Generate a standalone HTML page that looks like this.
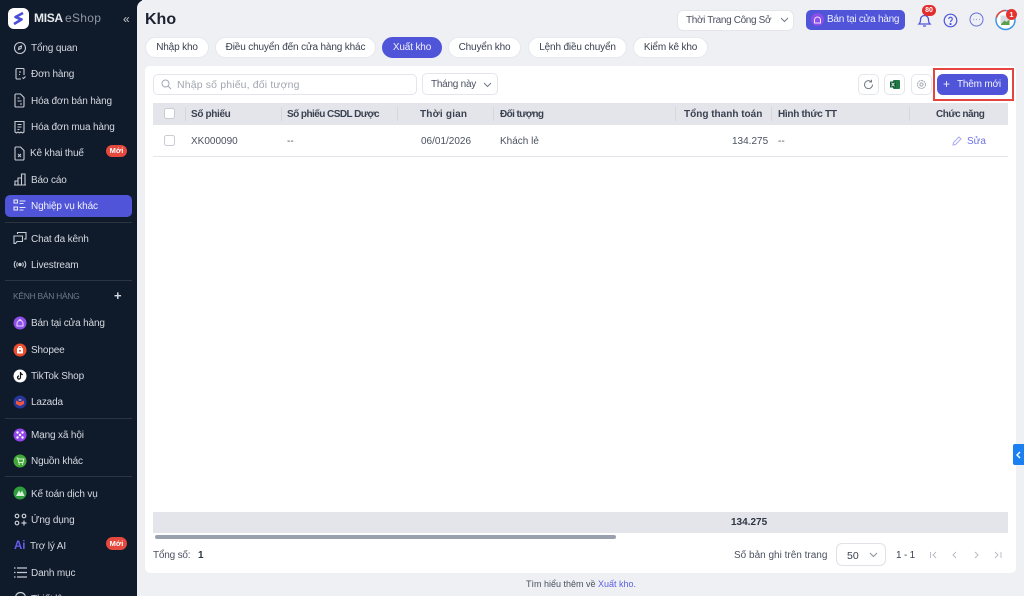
<!DOCTYPE html>
<html><head><meta charset="utf-8">
<style>
*{box-sizing:border-box}
html,body{margin:0;padding:0;width:1024px;height:596px;overflow:hidden;background:#eef0f4;font-family:"Liberation Sans","Noto Sans CJK SC",sans-serif;font-size:10px;color:#3a4150}
#root{position:absolute;left:0;top:0;width:1024px;height:596px;overflow:hidden;background:#eef0f4}
.a{position:absolute;white-space:nowrap}
.t{position:absolute;white-space:nowrap;line-height:14px;height:14px}
#side{position:absolute;left:0;top:0;width:142px;height:596px;background:#0f1a2a;overflow:hidden}
#main{position:absolute;left:137px;top:0;width:887px;height:596px;background:#eef0f4;border-radius:8px 0 0 0}
.m{position:absolute;left:31px;margin-top:1px;color:#d5d9e0;white-space:nowrap;line-height:14px;height:14px;font-size:10px;letter-spacing:-.15px}
.sep{position:absolute;left:5px;width:127px;height:1px;background:#2a3443}
.tab{position:absolute;top:37px;height:21px;background:#fff;border:1px solid #e6e8ee;border-radius:11px;text-align:center;line-height:20px;font-size:10px;letter-spacing:-.15px;color:#3a4150;white-space:nowrap}
.th{position:absolute;top:108px;line-height:14px;font-weight:bold;font-size:10px;color:#3a4150;white-space:nowrap}
.div{position:absolute;top:107px;width:1px;height:14px;background:#d5d7dd}
.td{position:absolute;top:135px;line-height:14px;font-size:10px;color:#4a5160;white-space:nowrap}
.ic{position:absolute}
.sq{position:absolute;top:74px;width:21px;height:21px;background:#fff;border:1px solid #e4e6eb;border-radius:5px}
</style></head><body>
<div id="root">
<div id="side">
<svg class="ic" style="left:8px;top:8px" width="21" height="21" viewBox="0 0 21 21"><rect width="21" height="21" rx="6" fill="#fff"/><path d="M15 5 L7.500 9 L13.500 11.500 L6 16" fill="none" stroke="#4a50d6" stroke-width="2.600" stroke-linejoin="round"/></svg>
<div class="t" style="left:34px;top:11px;font-size:12px;font-weight:bold;color:#e8eaee;letter-spacing:-.3px">MISA</div>
<div class="t" style="left:65px;top:11px;font-size:12px;color:#8f96a3;letter-spacing:.3px">eShop</div>
<div class="t" style="left:123px;top:12px;font-size:12px;color:#c8ccd4">«</div>

<svg class="ic" style="left:13px;top:41px" width="14" height="14" viewBox="0 0 14 14" fill="none" stroke="#c8ccd4" stroke-width="1.100"><circle cx="7" cy="7" r="5.500"/><path d="M5.500 8.500 L6 6 L8.500 5 L8 7.500Z"/></svg>
<div class="m" style="top:41px">Tổng quan</div>
<svg class="ic" style="left:14px;top:67px" width="13" height="14" viewBox="0 0 13 14" fill="none" stroke="#c8ccd4" stroke-width="1.100"><path d="M7 12H3a1 1 0 0 1-1-1V2.500a1 1 0 0 1 1-1h6a1 1 0 0 1 1 1V8M5 5h2M5 7.500h1M8.500 10.500l1 1 2-2"/></svg>
<div class="m" style="top:67px">Đơn hàng</div>
<svg class="ic" style="left:13px;top:93px" width="13" height="15" viewBox="0 0 13 15" fill="none" stroke="#c8ccd4" stroke-width="1.100"><path d="M2 2a1 1 0 0 1 1-1h4.500l3.500 3.500V13a1 1 0 0 1-1 1H3a1 1 0 0 1-1-1zM4.500 5h2M4.500 8h4M7 11h2"/></svg>
<div class="m" style="top:94px">Hóa đơn bán hàng</div>
<svg class="ic" style="left:13px;top:120px" width="13" height="14" viewBox="0 0 13 14" fill="none" stroke="#c8ccd4" stroke-width="1.100"><path d="M2 1.500h9v10.500l-1.500 1-1.500-1-1.500 1-1.500-1-1.500 1-1.500-1zM4.500 4.500h4M4.500 7h4M4.500 9.500h2"/></svg>
<div class="m" style="top:120px">Hóa đơn mua hàng</div>
<svg class="ic" style="left:13px;top:146px" width="13" height="15" viewBox="0 0 13 15" fill="none" stroke="#c8ccd4" stroke-width="1.100"><path d="M2 2a1 1 0 0 1 1-1h4.500l3.500 3.500V13a1 1 0 0 1-1 1H3a1 1 0 0 1-1-1zM5 8l3 3M8 8l-3 3"/></svg>
<div class="m" style="left:30px;top:146px">Kê khai thuế</div>
<div class="a" style="left:106px;top:145px;width:21px;height:12px;border-radius:6px;background:#e5483c;color:#fff;font-size:7.500px;font-weight:bold;text-align:center;line-height:12px">Mới</div>
<svg class="ic" style="left:13px;top:172px" width="14" height="14" viewBox="0 0 14 14" fill="none" stroke="#c8ccd4" stroke-width="1.100"><path d="M1 13h12M2 13V9h3v4M5 13V6h3.500v7M8.500 13V2H12v11"/></svg>
<div class="m" style="top:173px">Báo cáo</div>
<div class="a" style="left:5px;top:195px;width:127px;height:22px;background:#4f54d9;border-radius:5px"></div>
<svg class="ic" style="left:13px;top:199px" width="14" height="13" viewBox="0 0 14 13" fill="none" stroke="#e4e6f8" stroke-width="1.100"><rect x="1" y="1" width="3.500" height="3"/><rect x="1" y="8" width="3.500" height="3"/><path d="M6.500 2h6M6.500 4.500h4M6.500 8.500h6M6.500 11h4"/></svg>
<div class="m" style="top:199px;color:#f2f3fb">Nghiệp vụ khác</div>
<div class="sep" style="top:222px"></div>
<svg class="ic" style="left:13px;top:231px" width="14" height="14" viewBox="0 0 14 14" fill="none" stroke="#c8ccd4" stroke-width="1.100"><path d="M4.500 3V1.500h8.500v6.500h-2M1 5h8.500v5.500H4L2.500 12.500H1z"/></svg>
<div class="m" style="top:232px">Chat đa kênh</div>
<svg class="ic" style="left:13px;top:258px" width="14" height="13" viewBox="0 0 14 13" fill="none" stroke="#c8ccd4" stroke-width="1.100"><circle cx="7" cy="6.500" r="1.200" fill="#c8ccd4"/><path d="M4.500 4.500a3 3 0 0 0 0 4M9.500 4.500a3 3 0 0 1 0 4M2.500 3a5.500 5.500 0 0 0 0 7M11.500 3a5.500 5.500 0 0 1 0 7"/></svg>
<div class="m" style="top:258px">Livestream</div>
<div class="sep" style="top:280px"></div>
<div class="t" style="left:13px;top:289px;font-size:8.500px;color:#6d7888;letter-spacing:-.3px">KÊNH BÁN HÀNG</div>
<div class="t" style="left:114px;top:289px;font-size:13px;font-weight:bold;color:#d5d9e0">+</div>

<svg class="ic" style="left:13px;top:316px" width="14" height="14" viewBox="0 0 14 14"><circle cx="7" cy="7" r="6.500" fill="#8d4fe8"/><path d="M4 10V7.500a3 3 0 0 1 6 0V10zM5.500 4.500l1.500-1 1.500 1" fill="none" stroke="#e6d8fb" stroke-width="1"/></svg>
<div class="m" style="top:316px">Bán tại cửa hàng</div>
<svg class="ic" style="left:13px;top:343px" width="14" height="14" viewBox="0 0 14 14"><circle cx="7" cy="7" r="6.500" fill="#ee4d2d"/><rect x="4" y="5" width="6" height="5.500" rx=".8" fill="#fff"/><path d="M5.500 5a1.500 1.500 0 0 1 3 0" fill="none" stroke="#fff"/><circle cx="7" cy="7.700" r="1" fill="#ee4d2d"/></svg>
<div class="m" style="top:343px">Shopee</div>
<svg class="ic" style="left:13px;top:369px" width="14" height="14" viewBox="0 0 14 14"><circle cx="7" cy="7" r="6.500" fill="#fff"/><path d="M7.500 3v5.500a1.500 1.500 0 1 1-1.500-1.500M7.500 3.500c.3 1.300 1 2 2.300 2.200" fill="none" stroke="#111" stroke-width="1.200"/></svg>
<div class="m" style="top:369px">TikTok Shop</div>
<svg class="ic" style="left:13px;top:395px" width="14" height="14" viewBox="0 0 14 14"><circle cx="7" cy="7" r="6.500" fill="#27389a"/><path d="M3 5.500l4 1.700 4-1.700v3.500l-4 2-4-2z" fill="#f0563f"/><path d="M5 5l2-1 2 1-2 1z" fill="#f39ab0"/></svg>
<div class="m" style="top:395px">Lazada</div>
<div class="sep" style="top:418px"></div>
<svg class="ic" style="left:13px;top:428px" width="14" height="14" viewBox="0 0 14 14"><circle cx="7" cy="7" r="6.500" fill="#9146ee"/><circle cx="4.500" cy="4.500" r="1.200" fill="#fff"/><circle cx="9.500" cy="4.500" r="1.200" fill="#fff"/><circle cx="7" cy="7" r="1.200" fill="#fff"/><circle cx="4.500" cy="9.500" r="1.200" fill="#fff"/><circle cx="9.500" cy="9.500" r="1.200" fill="#fff"/></svg>
<div class="m" style="top:428px">Mạng xã hội</div>
<svg class="ic" style="left:13px;top:454px" width="14" height="14" viewBox="0 0 14 14"><circle cx="7" cy="7" r="6.500" fill="#43a838"/><path d="M3.500 4h1.200l1 4.500h4.300l.8-3.500H5" fill="none" stroke="#d8f2d4" stroke-width="1"/><circle cx="6.200" cy="10" r=".8" fill="#d8f2d4"/><circle cx="9.500" cy="10" r=".8" fill="#d8f2d4"/></svg>
<div class="m" style="top:454px">Nguồn khác</div>
<div class="sep" style="top:476px"></div>
<svg class="ic" style="left:13px;top:486px" width="14" height="14" viewBox="0 0 14 14"><circle cx="7" cy="7" r="6.500" fill="#2f9e3f"/><path d="M3 10l3-5.500 1.500 2.500L9 4.500l2.500 5.500z" fill="#d9f3dc"/></svg>
<div class="m" style="top:487px">Kế toán dịch vụ</div>
<svg class="ic" style="left:14px;top:513px" width="13" height="13" viewBox="0 0 13 13" fill="none" stroke="#c8ccd4" stroke-width="1.200"><circle cx="3" cy="3" r="1.800"/><circle cx="10" cy="3" r="1.800"/><circle cx="3" cy="10" r="1.800"/><path d="M10 7.500v5M7.500 10h5"/></svg>
<div class="m" style="top:513px">Ứng dụng</div>
<div class="t" style="left:14px;top:539px;font-size:11.500px;font-weight:bold;color:#6b5cf0">Ai</div>
<div class="m" style="left:30px;top:539px">Trợ lý AI</div>
<div class="a" style="left:106px;top:537px;width:21px;height:13px;border-radius:6.500px;background:#e5483c;color:#fff;font-size:7.500px;font-weight:bold;text-align:center;line-height:13px">Mới</div>
<svg class="ic" style="left:14px;top:567px" width="13" height="11" viewBox="0 0 13 11" fill="none" stroke="#c8ccd4" stroke-width="1.200"><path d="M3 1h10M3 5.500h10M3 10h10M0 1h1.500M0 5.500h1.500M0 10h1.500"/></svg>
<div class="m" style="top:566px">Danh mục</div>
<svg class="ic" style="left:14px;top:591px" width="13" height="13" viewBox="0 0 13 13" fill="none" stroke="#c8ccd4" stroke-width="1.200"><circle cx="6.500" cy="6.500" r="5"/></svg>
<div class="m" style="top:592px">Thiết lập</div>
</div>

<div id="main"></div>
<div class="a" style="left:145px;top:9px;font-size:16px;font-weight:bold;color:#1c2330;line-height:22px">Kho</div>

<div class="a" style="left:677px;top:10px;width:117px;height:21px;background:#fff;border:1px solid #e4e6eb;border-radius:6px;padding-left:8px;line-height:20px;color:#4a5160;font-size:10px;letter-spacing:-.35px">Thời Trang Công Sở</div>
<svg class="ic" style="left:780px;top:17px" width="9" height="6" viewBox="0 0 9 6" fill="none" stroke="#737a88"><path d="M1 1l3.500 3.500L8 1"/></svg>
<div class="a" style="left:806px;top:10px;width:99px;height:20px;background:#4f54d9;border-radius:5px"></div>
<svg class="ic" style="left:811px;top:13px" width="13" height="13" viewBox="0 0 13 13"><circle cx="6.500" cy="6.500" r="6.500" fill="#8a4fe6"/><path d="M3.500 10V7a3 3 0 0 1 6 0v3z" fill="none" stroke="#efe6fc"/></svg>
<div class="t" style="left:827px;top:13px;color:#eef0fb;font-size:10px;letter-spacing:-.25px">Bán tại cửa hàng</div>

<svg class="ic" style="left:917px;top:12px" width="15" height="16" viewBox="0 0 15 16" fill="none" stroke="#4f54d9" stroke-width="1.300"><path d="M2 12c1-1 1.500-2 1.500-4.500a4 4 0 0 1 8 0c0 2.500.5 3.500 1.500 4.500zM6 14h3"/></svg>
<div class="a" style="left:922px;top:5px;width:14px;height:11px;border-radius:6px;background:#e32d2d;color:#fff;font-size:7px;font-weight:bold;text-align:center;line-height:11px">80</div>
<svg class="ic" style="left:943px;top:13px" width="15" height="15" viewBox="0 0 15 15" fill="none" stroke="#4f54d9" stroke-width="1.200"><circle cx="7.500" cy="7.500" r="6.300"/><path d="M5.700 6a1.800 1.800 0 1 1 2.700 1.600c-.6.400-.9.700-.9 1.400"/><circle cx="7.500" cy="11" r=".5"/></svg>
<svg class="ic" style="left:969px;top:12px" width="15" height="15" viewBox="0 0 15 15" fill="none" stroke="#6a6fdc" stroke-width="1"><circle cx="7.500" cy="7.500" r="6.500"/><path d="M4.500 7.500h.6M7.200 7.500h.6M10 7.500h.6" stroke-width="1.200"/></svg>
<svg class="ic" style="left:995px;top:9px" width="21" height="22" viewBox="0 0 21 22"><circle cx="10.500" cy="11" r="9.500" fill="#fff" stroke="#3d97e8" stroke-width="1.500"/><path d="M10.500 1.500a9.500 9.500 0 0 0-9 7" fill="none" stroke="#e5483c" stroke-width="1.500"/><path d="M5.500 6.500h8v8h-8z" fill="#d7dbe0"/><path d="M6 15l3.500-3.500 2 1.500 3-2.500V16H6z" fill="#5aa04e"/></svg>
<div class="a" style="left:1006px;top:9px;width:11px;height:11px;border-radius:50%;background:#e5322f;color:#fff;font-size:7.500px;font-weight:bold;text-align:center;line-height:11px">1</div>

<div class="tab" style="left:145px;width:64px">Nhập kho</div>
<div class="tab" style="left:215px;width:161px">Điều chuyển đến cửa hàng khác</div>
<div class="tab" style="left:382px;width:60px;background:#4f54d9;border-color:#4f54d9;color:#f2f3fb">Xuất kho</div>
<div class="tab" style="left:448px;width:73px">Chuyển kho</div>
<div class="tab" style="left:528px;width:99px">Lệnh điều chuyển</div>
<div class="tab" style="left:633px;width:75px">Kiểm kê kho</div>

<div class="a" style="left:145px;top:66px;width:871px;height:507px;background:#fff;border-radius:5px"></div>

<div class="a" style="left:153px;top:74px;width:264px;height:21px;background:#fff;border:1px solid #e3e5ea;border-radius:5px"></div>
<svg class="ic" style="left:161px;top:79px" width="11" height="11" viewBox="0 0 11 11" fill="none" stroke="#a4a9b3"><circle cx="4.500" cy="4.500" r="3.500"/><path d="M7 7l3 3"/></svg>
<div class="t" style="left:177px;top:78px;color:#a1a6b0;font-size:10.500px;letter-spacing:.15px">Nhập số phiếu, đối tượng</div>
<div class="a" style="left:422px;top:73px;width:76px;height:22px;background:#fff;border:1px solid #e3e5ea;border-radius:5px"></div>
<div class="t" style="left:431px;top:78px;color:#4a5160;font-size:10px;letter-spacing:-.25px">Tháng này</div>
<svg class="ic" style="left:483px;top:82px" width="9" height="6" viewBox="0 0 9 6" fill="none" stroke="#737a88"><path d="M1 1l3.500 3.500L8 1"/></svg>

<div class="sq" style="left:858px"></div>
<svg class="ic" style="left:863px;top:79px" width="11" height="11" viewBox="0 0 11 11" fill="none" stroke="#777e8a"><path d="M9.500 5.500a4 4 0 1 1-1.500-3M8.500 .8v2.200H6.300"/></svg>
<div class="sq" style="left:884px"></div>
<svg class="ic" style="left:889px;top:79px" width="12" height="11" viewBox="0 0 12 11"><rect x="4" y="1" width="7" height="9" rx="1" fill="#1f7a45"/><rect x="1" y="2.500" width="6" height="6" fill="#12603a"/><path d="M2.500 3.800l3 3.500M5.500 3.800l-3 3.500" stroke="#fff" stroke-width=".8"/></svg>
<div class="sq" style="left:911px"></div>
<svg class="ic" style="left:916px;top:79px" width="11" height="11" viewBox="0 0 11 11" fill="none" stroke="#a4a9b3"><circle cx="5.500" cy="5.500" r="1.600"/><circle cx="5.500" cy="5.500" r="4" stroke-dasharray="2 .6"/></svg>

<div class="a" style="left:933px;top:68px;width:81px;height:33px;border:2px solid #e5453f"></div>
<div class="a" style="left:937px;top:74px;width:71px;height:21px;background:#4f54d9;border-radius:6px"></div>
<div class="t" style="left:943px;top:77px;color:#f2f3fb;font-size:12px;line-height:14px">+</div>
<div class="t" style="left:957px;top:78px;color:#f2f3fb;font-size:10px;letter-spacing:-.2px">Thêm mới</div>

<div class="a" style="left:153px;top:103px;width:855px;height:22px;background:#e3e5ea"></div>
<div class="a" style="left:164px;top:108px;width:11px;height:11px;background:#fff;border:1px solid #c9ccd3;border-radius:2.500px"></div>
<div class="div" style="left:185px"></div>
<div class="div" style="left:281px"></div>
<div class="div" style="left:397px"></div>
<div class="div" style="left:493px"></div>
<div class="div" style="left:675px"></div>
<div class="div" style="left:771px"></div>
<div class="div" style="left:909px"></div>
<div class="th" style="left:191px;letter-spacing:-.35px">Số phiếu</div>
<div class="th" style="left:287px;letter-spacing:-.55px">Số phiếu CSDL Dược</div>
<div class="th" style="left:420px;letter-spacing:.2px">Thời gian</div>
<div class="th" style="left:500px;letter-spacing:-.6px">Đối tượng</div>
<div class="th" style="left:684px">Tổng thanh toán</div>
<div class="th" style="left:778px;letter-spacing:-.3px">Hình thức TT</div>
<div class="th" style="left:936px;letter-spacing:-.5px">Chức năng</div>

<div class="a" style="left:164px;top:135px;width:11px;height:11px;background:#fff;border:1px solid #c9ccd3;border-radius:2.500px"></div>
<div class="td" style="left:191px">XK000090</div>
<div class="td" style="left:287px">--</div>
<div class="td" style="left:421px">06/01/2026</div>
<div class="td" style="left:500px">Khách lẻ</div>
<div class="td" style="left:732px">134.275</div>
<div class="td" style="left:778px">--</div>
<svg class="ic" style="left:952px;top:136px" width="10" height="10" viewBox="0 0 10 10" fill="none" stroke="#a9acee"><path d="M1 9l.5-2.500L7 1l2 2-5.500 5.500z"/></svg>
<div class="td" style="left:967px;color:#6d72e0">Sửa</div>
<div class="a" style="left:153px;top:156px;width:855px;height:1px;background:#e3e5ea"></div>

<div class="a" style="left:153px;top:512px;width:855px;height:21px;background:#e3e5ea"></div>
<div class="t" style="left:731px;top:516px;font-weight:bold;color:#2f3643;font-size:10px">134.275</div>
<div class="a" style="left:155px;top:535px;width:461px;height:4px;border-radius:2px;background:#9aa1ae"></div>

<div class="t" style="left:153px;top:549px;color:#4a5160;font-size:10px;letter-spacing:-.2px">Tổng số:</div>
<div class="t" style="left:198px;top:549px;font-weight:bold;color:#2f3643;font-size:10px">1</div>
<div class="t" style="left:734px;top:549px;color:#4a5160;font-size:10px">Số bản ghi trên trang</div>
<div class="a" style="left:836px;top:543px;width:50px;height:23px;background:#fff;border:1px solid #e0e2e7;border-radius:6px"></div>
<div class="t" style="left:847px;top:549px;color:#3a4150;font-size:10.500px">50</div>
<svg class="ic" style="left:869px;top:552px" width="9" height="6" viewBox="0 0 9 6" fill="none" stroke="#8c929e"><path d="M1 1l3.500 3.500L8 1"/></svg>
<div class="t" style="left:896px;top:549px;color:#3a4150;font-size:10px;letter-spacing:-.2px">1 - 1</div>
<svg class="ic" style="left:930px;top:551px" width="72" height="8" viewBox="0 0 72 8" fill="none" stroke="#b5b9c2" stroke-width=".9"><path d="M.5 1v6M6 1L3 4l3 3M26 1l-3 3 3 3M45 1l3 3-3 3M65 1l3 3-3 3M71 1v6"/></svg>

<div class="t" style="left:526px;top:577px;color:#4a5160;font-size:9px">Tìm hiểu thêm về <span style="color:#5a5fe0">Xuất kho.</span></div>

<div class="a" style="left:1013px;top:444px;width:11px;height:21px;background:#1a7ff0;border-radius:2px 0 0 2px"></div>
<svg class="ic" style="left:1015px;top:451px" width="6" height="8" viewBox="0 0 6 8" fill="none" stroke="#fff" stroke-width="1.500"><path d="M5 1L2 4l3 3"/></svg>
</div>
</body></html>
